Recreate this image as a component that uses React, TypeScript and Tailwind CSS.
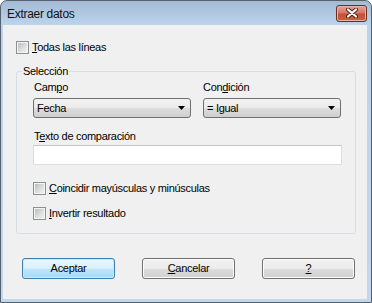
import React from 'react';

const Check: React.FC<{ children: React.ReactNode }> = ({ children }) => (
  <div className="flex items-center gap-[3px] h-[13px]">
    <div className="w-[13px] h-[13px] border border-[#8e8f8f] bg-[#f4f4f4] p-[1px]">
      <div className="w-full h-full bg-[linear-gradient(135deg,#b9bdc2_0%,#dfe0e2_60%,#f0f0f0_100%)]" />
    </div>
    <span className="leading-[13px]">{children}</span>
  </div>
);

const Combo: React.FC<{ value: string; width: string }> = ({ value, width }) => (
  <div
    className={`${width} h-[20px] mt-[4px] flex items-center justify-between pl-[3px] pr-[5px] rounded-[3px] border border-[#707070] bg-[linear-gradient(to_bottom,#f2f2f2_0%,#ebebeb_50%,#dddddd_50%,#cfcfcf_100%)]`}
  >
    <span>{value}</span>
    <svg width="7" height="4" viewBox="0 0 7 4">
      <path d="M0 0H7L3.5 4Z" fill="#000" />
    </svg>
  </div>
);

const Button: React.FC<{ children: React.ReactNode; primary?: boolean }> = ({ children, primary }) => (
  <div
    className={
      primary
        ? 'w-[93px] h-[21px] flex items-center justify-center rounded-[3px] border border-[#3c7fb1] shadow-[inset_0_0_0_1px_#c8ecfd] bg-[linear-gradient(to_bottom,#eaf6fd_0%,#d9f0fc_50%,#bee6fd_50%,#a7d9f5_100%)]'
        : 'w-[93px] h-[21px] flex items-center justify-center rounded-[3px] border border-[#707070] shadow-[inset_0_0_0_1px_#fcfcfc] bg-[linear-gradient(to_bottom,#f2f2f2_0%,#ebebeb_50%,#dddddd_50%,#cfcfcf_100%)]'
    }
  >
    {children}
  </div>
);

export default function App() {
  return (
    <div className="w-[372px] h-[303px] flex flex-col rounded-t-[7px] border border-[#56606d] bg-[linear-gradient(to_bottom,#a3bbd7_0px,#bcd3ec_24px,#c2d7ee_100%)] font-['Liberation_Sans',Arial,sans-serif] text-[11px] tracking-[-0.3px] text-black">
      {/* title bar */}
      <div className="h-[24px] flex items-center justify-between pl-[6px] pr-[4px]">
        <span className="text-[12px] tracking-[-0.3px] pt-[1px] text-[#111]">Extraer datos</span>
        <div className="w-[31px] h-[17px] flex items-center justify-center rounded-[3px] border border-[#6e2b22] bg-[linear-gradient(to_bottom,#e5a595_0%,#d57865_45%,#c2503b_55%,#c8604a_100%)] shadow-[inset_0_0_0_1px_#eeb2a4]">
          <svg width="14" height="10" viewBox="0 0 14 10">
            <path d="M3 1.5L11 8.5M11 1.5L3 8.5" stroke="#4a1d16" strokeWidth="4" strokeLinecap="round" />
            <path d="M3 1.5L11 8.5M11 1.5L3 8.5" stroke="#fff" strokeWidth="2.2" strokeLinecap="round" />
          </svg>
        </div>
      </div>

      {/* client area */}
      <div className="flex-1 ml-[2px] mr-[4px] mb-[3px] bg-[#f0f0f0] flex flex-col pl-[13px]">
        <div className="mt-[16px]">
          <Check>
            <u>T</u>odas las líneas
          </Check>
        </div>

        <fieldset className="mt-[11px] w-[340px] rounded-[3px] border border-[#d5dfe5] pb-[13px]">
          <legend className="ml-[5px] px-[1px] leading-[13px]">Selección</legend>

          <div className="pl-[16px]">
            <div className="mt-[3px] flex gap-[12px]">
              <div className="flex flex-col">
                <span className="leading-[13px] pl-[1px]">
                  Cam<u>p</u>o
                </span>
                <Combo value="Fecha" width="w-[158px]" />
              </div>
              <div className="flex flex-col">
                <span className="leading-[13px]">
                  Con<u>d</u>ición
                </span>
                <Combo value="= Igual" width="w-[138px]" />
              </div>
            </div>

            <div className="mt-[12px] leading-[13px] pl-[1px]">
              T<u>e</u>xto de comparación
            </div>
            <div className="mt-[2px] w-[309px] h-[20px] bg-white border border-[#dadde1] border-t-[#c3c7cc]" />

            <div className="mt-[17px]">
              <Check>
                <u>C</u>oincidir mayúsculas y minúsculas
              </Check>
            </div>
            <div className="mt-[12px]">
              <Check>
                <u>I</u>nvertir resultado
              </Check>
            </div>
          </div>
        </fieldset>

        <div className="mt-[24px] ml-[6px] flex gap-[27px]">
          <Button primary>Aceptar</Button>
          <Button>
            <span>
              <u>C</u>ancelar
            </span>
          </Button>
          <Button>
            <u>?</u>
          </Button>
        </div>
      </div>
    </div>
  );
}
